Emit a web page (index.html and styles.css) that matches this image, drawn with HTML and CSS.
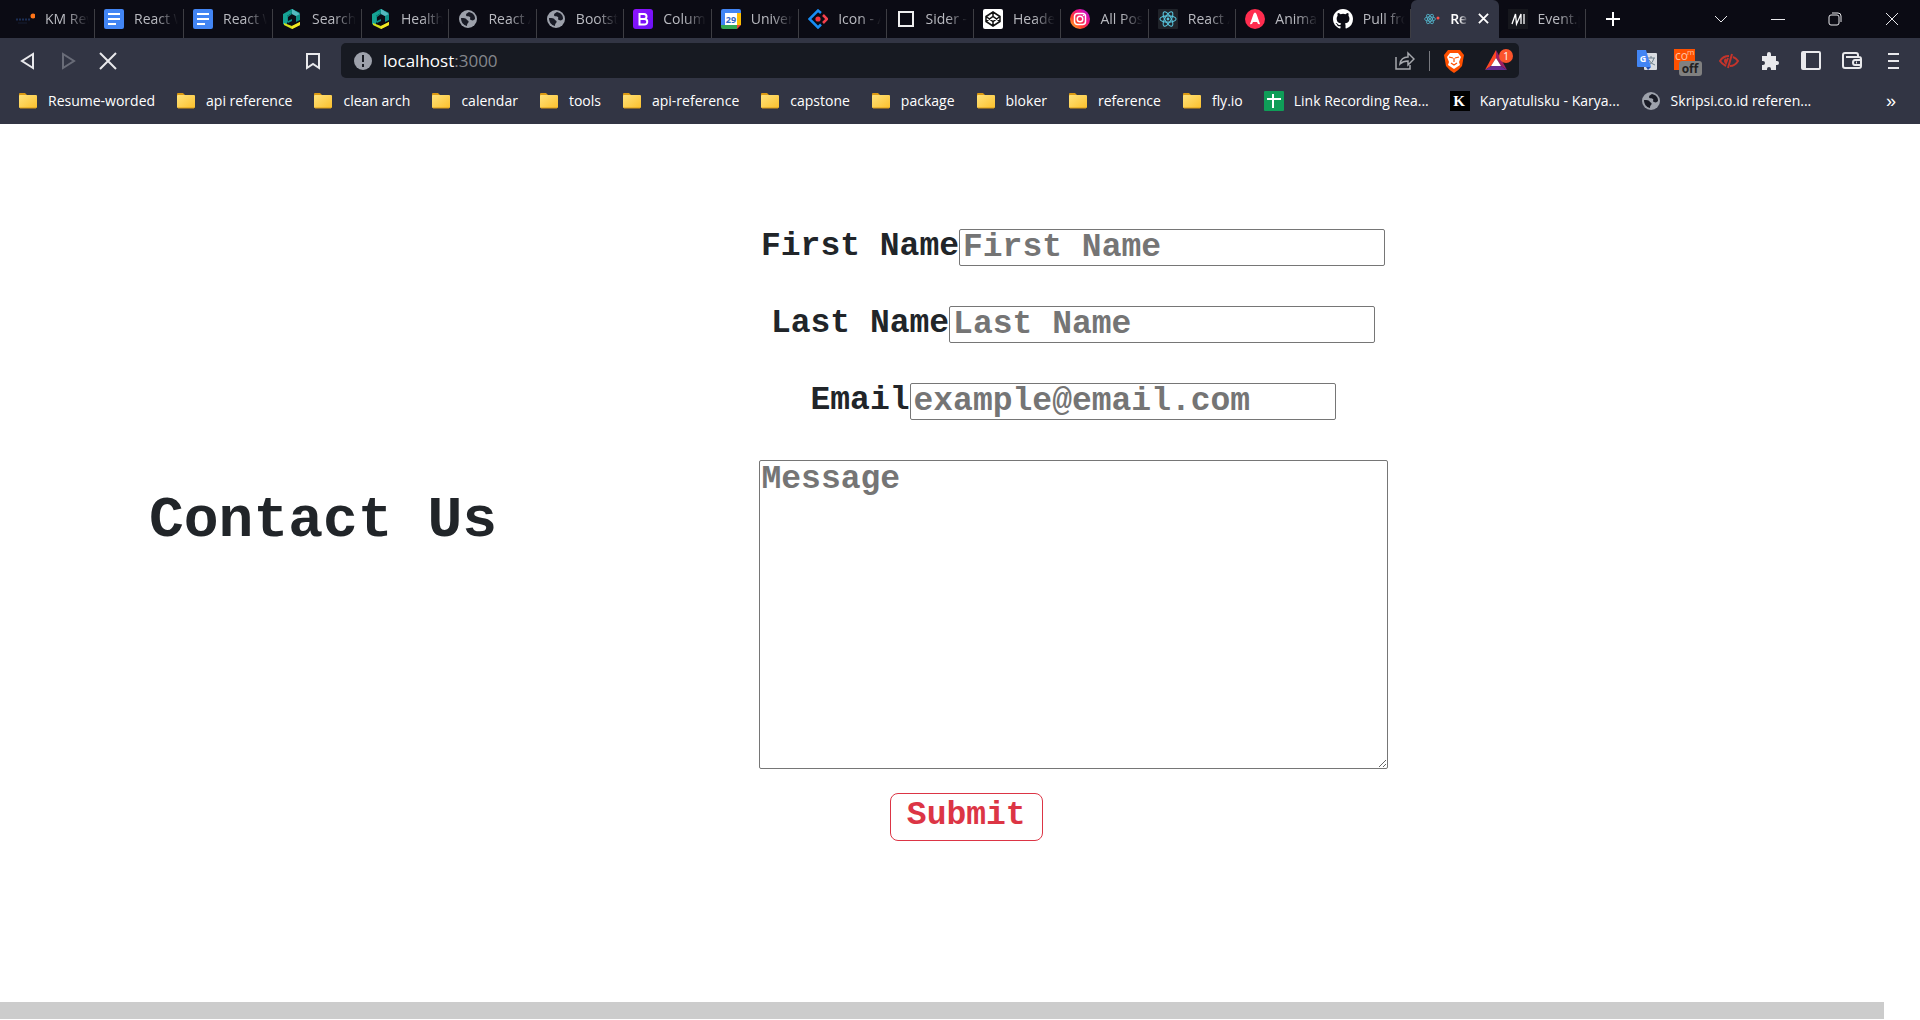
FILE: index.html
```html
<!DOCTYPE html>
<html lang="en">
<head>
<meta charset="utf-8">
<title>React App</title>
<link rel="stylesheet" href="styles.css">
</head>
<body>
<svg class="sprite" aria-hidden="true">
  <defs>
    <linearGradient id="gold" x1="0" y1="0" x2="1" y2="1"><stop offset="0" stop-color="#ffe27a"/><stop offset="1" stop-color="#fbc02d"/></linearGradient>
    <linearGradient id="insta" x1="0" y1="1" x2="1" y2="0"><stop offset="0" stop-color="#ffd22e"/><stop offset=".35" stop-color="#ff3d2e"/><stop offset=".65" stop-color="#f0128c"/><stop offset="1" stop-color="#a11cf0"/></linearGradient>
    <linearGradient id="violet" x1="0" y1="0" x2="1" y2="1"><stop offset="0" stop-color="#9013fe"/><stop offset="1" stop-color="#6a11f5"/></linearGradient>
  </defs>
  <symbol id="docs" viewBox="0 0 20 20"><rect width="20" height="20" rx="2" fill="#4285f4"/><path d="M4 5h12M4 10h12M4 15h8" stroke="#fff" stroke-width="2"/></symbol>
  <symbol id="cube" viewBox="0 0 20 20"><path d="M10 0L1 5v10l4 2V7l5-3 4 2 4-2z" fill="#16a394"/><path d="M10 0l8 5v6l-4 2V7l-4-2-4 3v4l4-2v2l-4 2-1-1V7l5-3-4-2z" fill="#0c8f86"/><path d="M10 0l8 5-4 2-4-2z" fill="#55b9c0"/><path d="M2 14l8 3 8-4v3l-8 4-8-4z" fill="#d5e21b"/><path d="M10 17l8-4v3l-8 4z" fill="#f4e722"/></symbol>
  <symbol id="globe" viewBox="0 0 20 20"><circle cx="10" cy="10" r="9" fill="#9da1ab"/><path d="M3 9c3 0 5 0 6 2 2 1 2 2 1 3s-1 2-1 3c-4-1-6-4-6-8zM11 3c-1 1-3 1-3 3s3 1 4 2-1 2 1 3 3 0 4-1c0-4-2-6-6-7z" fill="currentColor"/></symbol>
  <symbol id="folder" viewBox="0 0 20 20"><path d="M1 3q0-1 1-1h5l2 2h8v4H1z" fill="#dc9a12"/><rect x="1" y="4" width="18" height="13" rx="1" fill="url(#gold)"/><path d="M2 17h16" stroke="#d99a17"/></symbol>
  <symbol id="atom" viewBox="0 0 20 20"><g fill="none" stroke="#58c4dc" stroke-width="1.200"><ellipse cx="10" cy="10" rx="9" ry="3.500"/><ellipse cx="10" cy="10" rx="9" ry="3.500" transform="rotate(60 10 10)"/><ellipse cx="10" cy="10" rx="9" ry="3.500" transform="rotate(120 10 10)"/></g><circle cx="10" cy="10" r="1.600" fill="#58c4dc"/></symbol>
</svg>

<header class="browser">
  <div class="tabstrip">
    <nav class="tabs" aria-label="Tabs">
      <a class="tab" href="#"><svg class="ico" viewBox="0 0 20 20"><circle cx="18" cy="7" r="2.500" fill="#ff7418"/><path d="M1 10.500h15" stroke="#1c2f55" stroke-width="2" stroke-dasharray="2 1"/><path d="M3 14h9" stroke="#171f33"/></svg><span class="name">KM Rewrite</span></a>
      <a class="tab" href="#"><svg class="ico"><use href="#docs"/></svg><span class="name">React Web</span></a>
      <a class="tab" href="#"><svg class="ico"><use href="#docs"/></svg><span class="name">React Web</span></a>
      <a class="tab" href="#"><svg class="ico"><use href="#cube"/></svg><span class="name">Search</span></a>
      <a class="tab" href="#"><svg class="ico"><use href="#cube"/></svg><span class="name">Health</span></a>
      <a class="tab" href="#"><svg class="ico globe"><use href="#globe"/></svg><span class="name">React App</span></a>
      <a class="tab" href="#"><svg class="ico globe"><use href="#globe"/></svg><span class="name">Bootstrap</span></a>
      <a class="tab" href="#"><svg class="ico" viewBox="0 0 20 20"><rect width="20" height="20" rx="3" fill="url(#violet)"/><path d="M6.500 5h4.500a2.500 2.500 0 0 1 0 5H6.500zM6.500 10h5a2.600 2.600 0 0 1 0 5.500h-5z" fill="none" stroke="#fff" stroke-width="2"/></svg><span class="name">Columns</span></a>
      <a class="tab" href="#"><svg class="ico" viewBox="0 0 20 20"><path d="M2 0h16q2 0 2 2v3H0V2q0-2 2-2z" fill="#4285f4"/><path d="M0 4h4v12H0z" fill="#4285f4"/><path d="M16 4h4v12h-4z" fill="#fbbc04"/><path d="M0 16h16v4H2q-2 0-2-2z" fill="#34a853"/><path d="M16 16h4l-4 4z" fill="#ea4335"/><path d="M4 4h12v12H4z" fill="#fff"/><text x="10" y="14" class="date">29</text></svg><span class="name">Universal</span></a>
      <a class="tab" href="#"><svg class="ico" viewBox="0 0 20 20" fill="none" stroke-width="2.500"><path d="M13 4L10 1.500 1.500 10l8.500 8.500 3-3" stroke="#178df5"/><path d="M15 6l4 4-4 4" stroke="#f5414d"/><circle cx="10" cy="10" r="2.600" fill="#f5333f"/></svg><span class="name">Icon - Ant</span></a>
      <a class="tab" href="#"><svg class="ico" viewBox="0 0 20 20"><rect x="3" y="3" width="14" height="14" fill="none" stroke="#eee" stroke-width="2"/></svg><span class="name">Sider - A</span></a>
      <a class="tab" href="#"><svg class="ico" viewBox="0 0 20 20"><rect width="20" height="20" rx="2" fill="#fff"/><path d="M10 3l7 4.500v5L10 17l-7-4.500v-5zM10 3v4.500M10 12.500V17M3 7.500l7 5 7-5M3 12.500l7-5 7 5" fill="none" stroke="#111" stroke-width="1.500"/></svg><span class="name">Header</span></a>
      <a class="tab" href="#"><svg class="ico" viewBox="0 0 20 20"><circle cx="10" cy="10" r="10" fill="url(#insta)"/><g fill="none" stroke="#fff" stroke-width="1.500"><rect x="4.500" y="4.500" width="11" height="11" rx="3"/><circle cx="10" cy="10" r="2.800"/></g><circle cx="13.500" cy="6.500" r=".8" fill="#fff"/></svg><span class="name">All Posts</span></a>
      <a class="tab" href="#"><svg class="ico" viewBox="0 0 20 20"><rect width="20" height="20" rx="1" fill="#20232a"/><use href="#atom" x="1" y="1" width="18" height="18"/></svg><span class="name">React App</span></a>
      <a class="tab" href="#"><svg class="ico" viewBox="0 0 20 20"><circle cx="10" cy="10" r="10" fill="#ff2d4f"/><path d="M5 15L8.500 5q1.500-3 3 0L15 15q-2 1-3-2h-4q-1 3-3 2z" fill="#fff"/></svg><span class="name">Animate</span></a>
      <a class="tab" href="#"><svg class="ico" viewBox="0 0 16 16"><path fill="#fff" d="M8 0C3.580 0 0 3.580 0 8c0 3.540 2.290 6.530 5.470 7.590.4.070.55-.17.55-.38v-1.490c-2.010.37-2.530-.49-2.690-.94-.09-.23-.48-.94-.82-1.130-.28-.15-.68-.52-.01-.53.63-.01 1.080.58 1.230.82.72 1.210 1.870.87 2.330.66.07-.52.28-.87.51-1.070-1.780-.2-3.640-.89-3.640-3.950 0-.87.31-1.590.82-2.150-.08-.2-.36-1.020.08-2.120 0 0 .67-.21 2.200.82a7.600 7.600 0 0 1 4 0c1.530-1.040 2.200-.82 2.200-.82.44 1.100.16 1.920.08 2.120.51.560.82 1.270.82 2.150 0 3.070-1.870 3.750-3.650 3.950.29.25.54.73.54 1.480v2.200c0 .21.15.46.55.38A8 8 0 0 0 16 8c0-4.420-3.580-8-8-8z"/></svg><span class="name">Pull from</span></a>
      <a class="tab current" href="#" aria-current="page"><svg class="ico" viewBox="0 0 20 20"><use href="#atom" x="4" y="4" width="12" height="12"/><circle cx="18" cy="9" r="1.500" fill="#ff5148"/></svg><span class="name">React</span><svg class="shut" viewBox="0 0 12 12"><path d="M1 1l10 10M11 1L1 11" stroke="#fff" stroke-width="2"/></svg></a>
      <a class="tab" href="#"><svg class="ico" viewBox="0 0 20 20"><rect width="20" height="20" fill="#16171d"/><path d="M4 15L7.500 5l1 10L13 5v10M16 5v10" fill="none" stroke="#fff" stroke-width="1.300"/></svg><span class="name">Event.preventDefault</span></a>
    </nav>
    <button class="icon-btn add" aria-label="New tab"><svg width="16" height="16" viewBox="0 0 16 16"><path d="M8 1v14M1 8h14" stroke="#fff" stroke-width="2"/></svg></button>
    <div class="window-buttons">
      <button class="icon-btn" aria-label="Search tabs"><svg width="14" height="14" viewBox="0 0 14 14"><path d="M1 4l6 6 6-6"/></svg></button>
      <button class="icon-btn" aria-label="Minimize"><svg width="14" height="14" viewBox="0 0 14 14"><path d="M0 7.500h14"/></svg></button>
      <button class="icon-btn" aria-label="Restore"><svg width="14" height="14" viewBox="0 0 14 14"><rect x="1" y="3" width="10" height="10" rx="2"/><path d="M4 1h6q3 0 3 3v6"/></svg></button>
      <button class="icon-btn" aria-label="Close"><svg width="14" height="14" viewBox="0 0 14 14"><path d="M1 1l12 12M13 1L1 13"/></svg></button>
    </div>
  </div>

  <div class="toolbar">
    <div class="moves">
      <button class="icon-btn" aria-label="Back"><svg width="20" height="20" viewBox="0 0 20 20"><path d="M15 3v14L4 10z"/></svg></button>
      <button class="icon-btn dim" aria-label="Forward"><svg width="20" height="20" viewBox="0 0 20 20"><path d="M5 3v14l11-7z"/></svg></button>
      <button class="icon-btn" aria-label="Stop"><svg width="20" height="20" viewBox="0 0 20 20"><path d="M2 2l16 16M18 2L2 18"/></svg></button>
    </div>
    <button class="icon-btn mark" aria-label="Bookmark"><svg width="20" height="20" viewBox="0 0 20 20"><path d="M4 3h12v14l-6-4-6 4z"/></svg></button>
    <div class="address">
      <svg width="20" height="20" viewBox="0 0 20 20"><circle cx="10" cy="10" r="9" fill="#9da1ab"/><path d="M10 4v7M10 13v3" stroke="#171a22" stroke-width="2"/></svg>
      <a class="url" href="#">localhost<span class="port">:3000</span></a>
      <svg class="share" width="20" height="20" viewBox="0 0 20 20" fill="none" stroke="#a6a8ad" stroke-width="1.500"><path d="M1 6v12h14v-4"/><path d="M5 13q1-7 8-7V2l6 6-6 6v-4q-5 0-8 3z"/></svg>
      <span class="bar"></span>
      <svg width="20" height="24" viewBox="0 0 20 24"><path d="M4 1h12l4 5-2 11q-3 4-8 7-5-3-8-7L0 6z" fill="#ff5000"/><path d="M6 4h8l3 4-2 5 1 3-6 4-6-4 1-3-2-5z" fill="#fff"/><path d="M5 8l4 1M15 8l-4 1M10 9v4M7 14l3 2 3-2" stroke="#ff5000" stroke-width="1.200" fill="none"/></svg>
      <svg width="30" height="24" viewBox="0 0 30 24"><path d="M12 1L1 21l6-4 5-8z" fill="#ff4724"/><path d="M12 1l11 20-6-4-5-8z" fill="#9e1f63"/><path d="M1 21h22l-6-4H7z" fill="#662d91"/><path d="M12 9l5 8H7z" fill="#fff"/><circle cx="22" cy="7" r="7" fill="#fb542b"/><text class="count" x="22" y="11">1</text></svg>
    </div>
    <div class="extensions">
      <button class="icon-btn" aria-label="Translate"><svg width="22" height="24" viewBox="0 0 22 24"><rect x="8" y="4" width="13" height="17" rx="1" fill="#d9dce1"/><path d="M12 9h7M15 7v2M18 9q-1 5-5 7M13 11q2 4 6 5" stroke="#6c7f8b" fill="none"/><path d="M1 1h9l5 17H2q-1 0-1-1z" fill="#4285f4"/><path d="M10 18h5l-3 3z" fill="#2451b4"/><text class="gee" x="7" y="13">G</text></svg></button>
      <button class="icon-btn" aria-label="Extension off"><svg width="28" height="30" viewBox="0 0 28 30"><rect width="21" height="21" y="3" fill="#ff5100"/><text class="com" x="1" y="14">co</text><text class="sup" x="13" y="9">m</text><rect x="5" y="15" width="23" height="15" rx="3" fill="#808080"/><text class="off" x="16" y="27">off</text></svg></button>
      <button class="icon-btn" aria-label="Hide"><svg width="20" height="20" viewBox="0 0 20 20" class="red"><path d="M7 15Q3 13 1 10q3-5 9-5M14 6q3 1 5 4-3 5-8 5M13 3L9 17M7 8q-2 2 0 4l2-5"/></svg></button>
      <button class="icon-btn" aria-label="Extensions"><svg width="20" height="20" viewBox="0 0 20 20"><path class="solid" d="M2 5h5V3a2 2 0 0 1 4 0v2h5v5h1a2 2 0 0 1 0 4h-1v5h-5v-1a2 2 0 0 0-4 0v1H2v-5h1a2 2 0 0 0 0-4H2z"/></svg></button>
      <button class="icon-btn" aria-label="Sidebar"><svg width="20" height="20" viewBox="0 0 20 20"><rect x="1" y="1" width="18" height="17" rx="1"/><path class="solid" d="M1 1h4v17H1z"/></svg></button>
      <button class="icon-btn" aria-label="Wallet"><svg width="20" height="20" viewBox="0 0 20 20"><path d="M16 6V4q0-2-2-2H3Q1 2 1 4v11q0 2 2 2h14q2 0 2-2V8q0-2-2-2H4M19 9h-6q-2 0-2 2.500T13 14h6M14 11.500h1"/></svg></button>
      <button class="icon-btn" aria-label="Menu"><svg width="14" height="18" viewBox="0 0 14 18"><path d="M2 2h11M2 9h11M2 16h11"/></svg></button>
    </div>
  </div>

  <nav class="bookmarks" aria-label="Bookmarks">
    <a href="#"><svg class="ico"><use href="#folder"/></svg>Resume-worded</a>
    <a href="#"><svg class="ico"><use href="#folder"/></svg>api reference</a>
    <a href="#"><svg class="ico"><use href="#folder"/></svg>clean arch</a>
    <a href="#"><svg class="ico"><use href="#folder"/></svg>calendar</a>
    <a href="#"><svg class="ico"><use href="#folder"/></svg>tools</a>
    <a href="#"><svg class="ico"><use href="#folder"/></svg>api-reference</a>
    <a href="#"><svg class="ico"><use href="#folder"/></svg>capstone</a>
    <a href="#"><svg class="ico"><use href="#folder"/></svg>package</a>
    <a href="#"><svg class="ico"><use href="#folder"/></svg>bloker</a>
    <a href="#"><svg class="ico"><use href="#folder"/></svg>reference</a>
    <a href="#"><svg class="ico"><use href="#folder"/></svg>fly.io</a>
    <a href="#"><svg class="ico" viewBox="0 0 20 20"><rect width="20" height="20" rx="1" fill="#0f9d58"/><path d="M9 3v14M3 8h14" stroke="#fff" stroke-width="2"/></svg>Link Recording Rea...</a>
    <a href="#"><svg class="ico" viewBox="0 0 20 20"><rect width="20" height="20" fill="#000"/><text class="kay" x="9" y="15">K</text></svg>Karyatulisku - Karya...</a>
    <a href="#"><svg class="ico globe"><use href="#globe"/></svg>Skripsi.co.id referen...</a>
    <button class="icon-btn more" aria-label="More bookmarks">»</button>
  </nav>
</header>

<main class="page">
  <section class="contact">
    <h1 class="title">Contact Us</h1>
    <form class="form">
      <div class="field"><label for="first">First Name</label><input id="first" type="text" placeholder="First Name"></div>
      <div class="field"><label for="last">Last Name</label><input id="last" type="text" placeholder="Last Name"></div>
      <div class="field"><label for="email">Email</label><input id="email" type="email" placeholder="example@email.com"></div>
      <textarea class="message" aria-label="Message" placeholder="Message"></textarea>
      <div class="actions"><button class="submit" type="submit">Submit</button></div>
    </form>
  </section>
  <div class="footer-bar"></div>
</main>
</body>
</html>
```
FILE: styles.css
```css
* { box-sizing: border-box; }

body {
  margin: 0;
  min-height: 100vh;
  display: flex;
  flex-direction: column;
  background: #fff;
  color: #212529;
  font-family: "Open Sans", "Noto Sans", sans-serif;
}

a { color: inherit; text-decoration: none; }
.sprite { position: absolute; width: 0; height: 0; }
.ico { width: 20px; height: 20px; flex: none; }
.globe { color: #191b26; }

.icon-btn {
  display: flex;
  align-items: center;
  justify-content: center;
  padding: 0;
  border: 0;
  background: none;
  color: #fff;
  fill: none;
  stroke: #e9e9ec;
  stroke-width: 2;
}
.icon-btn text { stroke: none; }
.icon-btn .solid { fill: #e9e9ec; stroke: none; }
.icon-btn .red { stroke: #c4342b; }
.icon-btn rect[fill], .icon-btn path[fill]:not([stroke]) { stroke: none; }
.icon-btn path[stroke="#6c7f8b"] { stroke-width: 1; }
.icon-btn.dim { stroke: #696c78; }

/* Browser chrome */
.browser { background: #323544; color: #fff; height: 124px; overflow: hidden; }

.tabstrip { display: flex; height: 38px; padding-left: 6px; background: #0b0b14; }
.tabs {
  display: grid;
  grid-template-columns: repeat(4, 89px) repeat(14, minmax(0, 1fr));
  flex: 0 1 1580px;
}
.tab {
  display: flex;
  align-items: center;
  gap: 10px;
  min-width: 0;
  padding: 0 6px 1px 9px;
  color: #b9bac0;
  font-size: 14px;
  background: linear-gradient(#3d3d43, #3d3d43) right bottom / 1px 29px no-repeat;
}
.name {
  flex: 1;
  overflow: hidden;
  white-space: nowrap;
  -webkit-mask-image: linear-gradient(90deg, #000 50%, transparent);
  mask-image: linear-gradient(90deg, #000 50%, transparent);
}
.current { background: #323544; border-radius: 6px 6px 0 0; color: #fff; padding-right: 10px; }
.current .name { font-weight: 600; }
.shut { width: 11px; height: 11px; flex: none; }
.add { width: 54px; }
.window-buttons { display: flex; margin-left: auto; }
.window-buttons .icon-btn { width: 57px; stroke-width: 1; }

.toolbar { display: flex; align-items: center; height: 45px; padding: 0 7px 0 8px; }
.moves { display: flex; }
.moves .icon-btn { width: 40px; }
.mark { width: 40px; margin-left: 165px; }
.address {
  display: flex;
  align-items: center;
  flex: 0 1 1178px;
  height: 35px;
  margin-left: 8px;
  padding: 0 5px 0 12px;
  background: #171a22;
  border-radius: 5px;
}
.url { margin-left: 10px; font-size: 17px; }
.port { color: #85878c; }
.share { margin-left: auto; }
.bar { width: 1px; height: 20px; margin: 0 14px; background: #77797f; }
.address svg:last-child { margin-left: 20px; }
.count { font-size: 10px; fill: #fff; text-anchor: middle; }
.extensions { display: flex; margin-left: auto; }
.extensions .icon-btn { width: 41px; }

.bookmarks { display: flex; align-items: center; gap: 21px; height: 35px; padding: 0 24px 0 18px; font-size: 14px; }
.bookmarks a { display: flex; align-items: center; gap: 10px; white-space: nowrap; }
.more { margin-left: auto; font-size: 18px; line-height: 20px; }

.date { font: bold 9px "Open Sans", sans-serif; fill: #3267c8; text-anchor: middle; }
.gee { font: bold 9px "Open Sans", sans-serif; fill: #fff; text-anchor: middle; }
.com { font: 12px "Open Sans", sans-serif; fill: #ffc3a3; }
.sup { font: 8px "Open Sans", sans-serif; fill: #ffc3a3; }
.off { font: bold 12px "Open Sans", sans-serif; fill: #222; text-anchor: middle; }
.kay { font: bold 15px "Liberation Serif", serif; fill: #fff; text-anchor: middle; }

/* Page */
.page {
  flex: 1;
  display: flex;
  flex-direction: column;
  padding: 105px 36px 1px 0;
  font-family: "Liberation Mono", monospace;
}
.contact { flex: 1; display: grid; grid-template-columns: 646fr 854fr 384fr; align-items: start; }
.title { align-self: start; margin: 0; padding-top: 260px; font-size: 58px; line-height: 64px; text-align: center; }
.form { display: flex; flex-direction: column; align-items: center; gap: 40px; font-size: 33px; font-weight: 700; }
.field { display: flex; align-items: center; height: 37px; line-height: 32px; }
.field label { padding-bottom: 1px; }
.field input, .message {
  border: 1px solid #767676;
  border-radius: 2px;
  background: #fff;
  color: #212529;
  font: inherit;
}
.field input { width: 426px; height: 37px; padding: 0 3px; }
.field input::placeholder, .message::placeholder { color: #757575; opacity: 1; }
.message { width: 629px; height: 309px; padding: 2px; line-height: 34px; resize: both; }
.actions { align-self: flex-start; display: flex; justify-content: center; width: 75%; margin-top: -16px; }
.submit {
  height: 48px;
  padding: 0 16px 2px;
  border: 1px solid #dc3545;
  border-radius: 8px;
  background: #fff;
  color: #dc3545;
  font: inherit;
  line-height: 32px;
}
.footer-bar { height: 17px; background: #ccc; }
```
